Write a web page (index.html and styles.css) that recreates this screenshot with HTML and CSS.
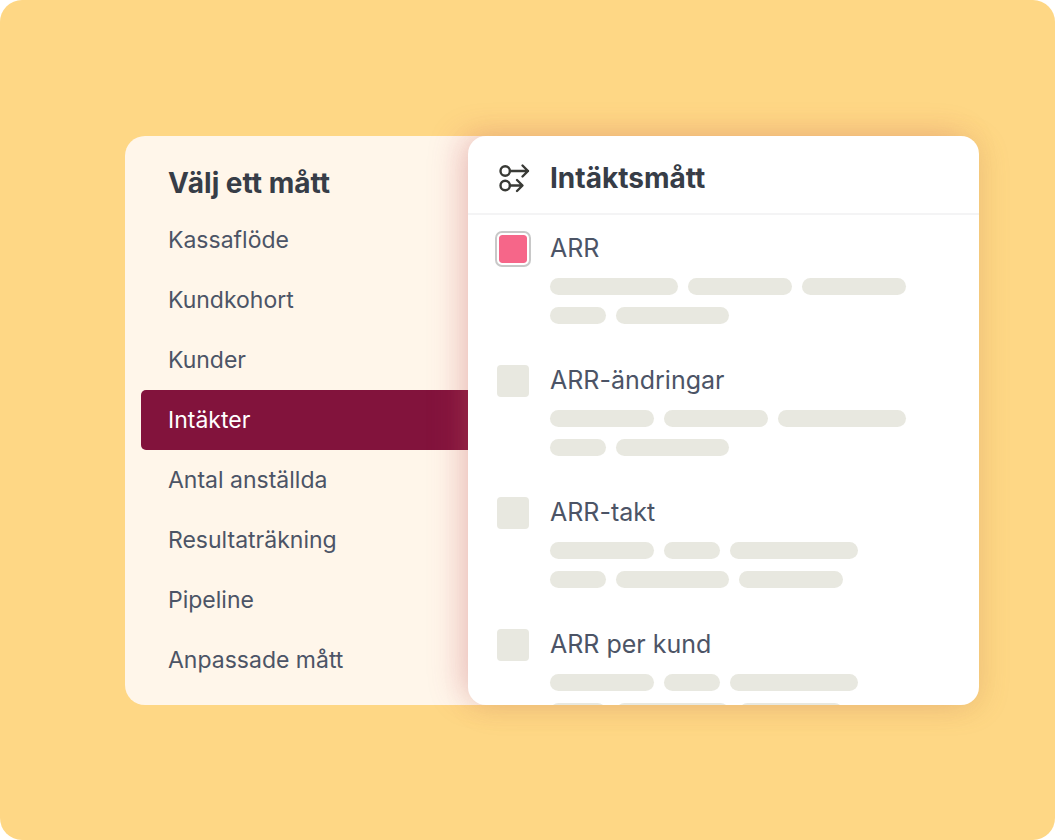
FILE: index.html
```
<!DOCTYPE html>
<html lang="sv">
<head>
    <meta charset="UTF-8">
    <meta name="viewport" content="width=device-width, initial-scale=1.0">
    <title>Välj ett mått</title>
    <link rel="stylesheet" href="styles.css">
</head>
<body>
    <main class="stage">
        <aside class="sidebar">
            <h2 class="sidebar-title">Välj ett mått</h2>
            <nav class="menu">
                <a class="menu-item" href="#">Kassaflöde</a>
                <a class="menu-item" href="#">Kundkohort</a>
                <a class="menu-item" href="#">Kunder</a>
                <a class="menu-item active" href="#" aria-current="true">Intäkter</a>
                <a class="menu-item" href="#">Antal anställda</a>
                <a class="menu-item" href="#">Resultaträkning</a>
                <a class="menu-item" href="#">Pipeline</a>
                <a class="menu-item" href="#">Anpassade mått</a>
            </nav>
        </aside>

        <section class="panel">
            <header class="panel-header">
                <svg class="panel-icon" width="32" height="30" viewBox="0 0 32 30" fill="none" stroke="#393a36" stroke-width="2.4" stroke-linecap="round" stroke-linejoin="round">
                    <circle cx="6.2" cy="8" r="4.7"/>
                    <path d="M11 8H29M23.5 2.5L29 8l-5.5 5.5"/>
                    <circle cx="6.2" cy="22.5" r="4.7"/>
                    <path d="M11 22.5H23M18 17l5.500 5.500L18 28"/>
                </svg>
                <h2 class="panel-title">Intäktsmått</h2>
            </header>

            <div class="metrics">
                <div class="metric">
                    <input class="metric-check" type="checkbox" id="arr" checked>
                    <label class="metric-name" for="arr">ARR</label>
                    <div class="lines">
                        <div class="line"><span class="bar xl"></span><span class="bar md"></span><span class="bar md"></span></div>
                        <div class="line"><span class="bar sm"></span><span class="bar lg"></span></div>
                    </div>
                </div>
                <div class="metric">
                    <input class="metric-check" type="checkbox" id="arr-change">
                    <label class="metric-name" for="arr-change">ARR-ändringar</label>
                    <div class="lines">
                        <div class="line"><span class="bar md"></span><span class="bar md"></span><span class="bar xl"></span></div>
                        <div class="line"><span class="bar sm"></span><span class="bar lg"></span></div>
                    </div>
                </div>
                <div class="metric">
                    <input class="metric-check" type="checkbox" id="arr-rate">
                    <label class="metric-name" for="arr-rate">ARR-takt</label>
                    <div class="lines">
                        <div class="line"><span class="bar md"></span><span class="bar sm"></span><span class="bar xl"></span></div>
                        <div class="line"><span class="bar sm"></span><span class="bar lg"></span><span class="bar md"></span></div>
                    </div>
                </div>
                <div class="metric">
                    <input class="metric-check" type="checkbox" id="arr-customer">
                    <label class="metric-name" for="arr-customer">ARR per kund</label>
                    <div class="lines">
                        <div class="line"><span class="bar md"></span><span class="bar sm"></span><span class="bar xl"></span></div>
                        <div class="line"><span class="bar sm"></span><span class="bar lg"></span><span class="bar md"></span></div>
                    </div>
                </div>
            </div>
        </section>
    </main>
</body>
</html>
```
FILE: styles.css
```
* {
    margin: 0;
    padding: 0;
    box-sizing: border-box;
}

body {
    font-family: Inter, "Liberation Sans", sans-serif;
    font-variant-ligatures: none;
    background: #fff;
    color: #4c5466;
}

.stage {
    display: grid;
    grid-template-columns: minmax(0, 343px) 1fr;
    grid-template-rows: minmax(0, 1fr);
    height: 100vh;
    padding: 136px 76px 135px 125px;
    background: #fed785;
    border-radius: 22px;
}

/* runs a little way in under the panel */
.sidebar {
    margin-right: -20px;
    padding: 29px 20px 0 16px;
    background: #fff6ea;
    border-radius: 20px 0 0 20px;
}

.sidebar-title,
.panel-title {
    font-size: 28px;
    line-height: 36px;
    font-weight: 700;
    color: #373d47;
}

.sidebar-title {
    padding-left: 27px;
    margin-bottom: 9px;
}

.menu-item {
    display: block;
    height: 60px;
    padding-left: 27px;
    font-size: 23px;
    line-height: 60px;
    color: #4c5466;
    text-decoration: none;
}

.menu-item.active {
    background: #82133c;
    color: #fff;
    border-radius: 5px 0 0 5px;
}

.panel {
    position: relative;
    overflow: hidden;
    background: #fff;
    border-radius: 18px;
    box-shadow: -12px -4px 32px -4px rgba(200, 70, 100, 0.26), 4px 4px 28px rgba(180, 140, 80, 0.18);
}

.panel-header {
    display: flex;
    align-items: center;
    gap: 19px;
    height: 79px;
    padding: 7px 31px 0;
    border-bottom: 2px solid #f4f4f5;
}

.metrics {
    padding: 18px 29px 0;
}

.metric {
    display: grid;
    grid-template-columns: 32px 1fr;
    grid-template-rows: 32px 1fr;
    column-gap: 21px;
    height: 132px;
}

.metric-check {
    appearance: none;
    width: 32px;
    height: 32px;
    background: #e8e8e0;
    border-radius: 4px;
}

.metric-check:checked {
    background: #f66689;
    background-clip: padding-box;
    border: 2px solid #fff;
    border-radius: 5px;
    box-shadow: 0 0 0 2px #c8c8c8;
}

.metric-name {
    font-size: 25px;
    line-height: 30px;
}

.lines {
    grid-column: 2;
    display: flex;
    flex-direction: column;
    gap: 12px;
    padding-top: 13px;
}

.line {
    display: flex;
    gap: 10px;
}

.bar {
    height: 17px;
    border-radius: 9px;
    background: #e8e8e0;
}

.sm {
    width: 56px;
}

.md {
    width: 104px;
}

.lg {
    width: 113px;
}

.xl {
    width: 128px;
}
```
